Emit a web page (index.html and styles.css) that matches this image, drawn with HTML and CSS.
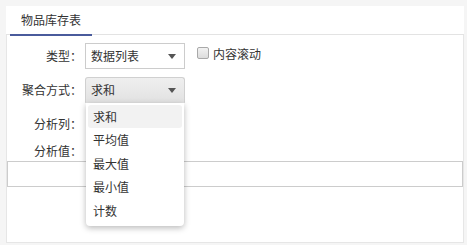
FILE: index.html
```html
<!DOCTYPE html>
<html lang="zh-CN">
<head>
<meta charset="utf-8">
<title>物品库存表</title>
<link rel="stylesheet" href="styles.css">
</head>
<body>
<div class="panel">
  <div class="tabs">
    <div class="tab">物品库存表</div>
  </div>
  <div class="content">
    <div class="row">
      <label class="lbl">类型：</label>
      <div class="select"><span>数据列表</span><i class="arrow"></i></div>
      <label class="check"><span class="box"></span><span>内容滚动</span></label>
    </div>
    <div class="row">
      <label class="lbl">聚合方式：</label>
      <div class="select-wrap">
        <div class="select open"><span>求和</span><i class="arrow"></i></div>
        <ul class="drop">
          <li class="active">求和</li>
          <li>平均值</li>
          <li>最大值</li>
          <li>最小值</li>
          <li>计数</li>
        </ul>
      </div>
    </div>
    <div class="row">
      <label class="lbl">分析列：</label>
    </div>
    <div class="row short">
      <label class="lbl">分析值：</label>
    </div>
    <div class="valuebox"></div>
  </div>
</div>
</body>
</html>
```
FILE: styles.css
```css
html, body {
  margin: 0;
  height: 100%;
}
body {
  background: #f5f5f5;
  padding: 6px 3px 2px 6px;
  box-sizing: border-box;
  font-family: "Noto Sans CJK SC", "Noto Sans", sans-serif;
  font-size: 12px;
  color: #333;
}
.panel {
  width: 458px;
  height: 237px;
  background: #fff;
  display: flex;
  flex-direction: column;
}
.tabs {
  height: 28px;
  border-bottom: 1px solid #e3e3e3;
  display: flex;
  align-items: flex-start;
  padding-left: 4px;
}
.tab {
  height: 28px;
  line-height: 28px;
  padding: 0 11px;
  border-bottom: 2px solid #4a5b9c;
  position: relative;
}
.content {
  flex: 1;
  border: 1px solid #e6e6e6;
  border-top: none;
  padding-top: 8px;
  display: flex;
  flex-direction: column;
  gap: 8px;
}
.row {
  display: flex;
  align-items: center;
  height: 26px;
}
.row.short {
  height: 20px;
  margin-top: -4px;
}
.lbl {
  width: 75px;
  margin-right: 3px;
  text-align: right;
  line-height: 20px;
  white-space: nowrap;
}
.select {
  width: 100px;
  height: 26px;
  box-sizing: border-box;
  border: 1px solid #ccc;
  background: #fff;
  display: flex;
  align-items: center;
  justify-content: space-between;
  padding: 0 8px 0 5px;
  line-height: 20px;
}
.select.open {
  background: linear-gradient(#efefef, #e2e2e2);
  border-color: #d0d0d0;
  border-bottom-color: #e2e2e2;
  border-radius: 3px 3px 0 0;
}
.arrow {
  width: 0;
  height: 0;
  border-left: 4px solid transparent;
  border-right: 4px solid transparent;
  border-top: 5px solid #555;
}
.select-wrap {
  position: relative;
}
.drop {
  position: absolute;
  top: 26px;
  left: 1px;
  width: 98px;
  box-sizing: border-box;
  margin: 0;
  padding: 2px 2px 4px;
  list-style: none;
  background: #fff;
  border-radius: 0 0 4px 4px;
  box-shadow: 0 2px 6px rgba(0, 0, 0, 0.28);
  z-index: 5;
}
.drop li {
  height: 23.4px;
  line-height: 23.4px;
  padding-left: 5px;
  border-radius: 3px;
}
.drop li.active {
  background: #f2f2f2;
}
.check {
  display: flex;
  align-items: center;
  align-self: flex-start;
  margin-top: 4px;
  margin-left: 12px;
  height: 14px;
  line-height: 14px;
}
.box {
  width: 12px;
  height: 12px;
  box-sizing: border-box;
  border: 1px solid #a9a9a9;
  border-radius: 2px;
  background: linear-gradient(#f2f2f2, #dcdcdc);
  margin-right: 4px;
  align-self: flex-start;
}
.valuebox {
  height: 26px;
  box-sizing: border-box;
  border: 1px solid #ccc;
  margin-top: -8px;
}
```
